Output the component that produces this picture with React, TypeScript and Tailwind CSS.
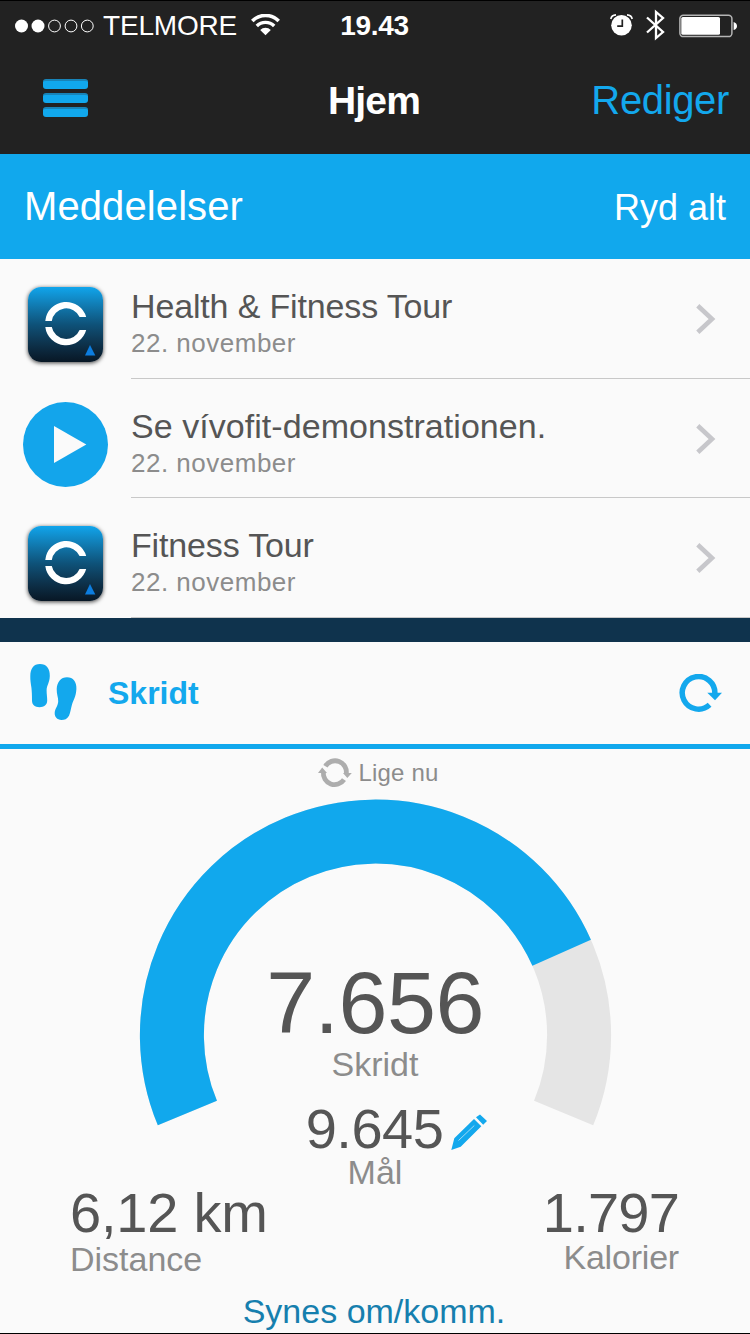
import React from "react";

const Notifications = [
  {
    id: 0,
    title: "Health & Fitness Tour",
    date: "22. november",
    icon: "tour",
    style: "h-[120px]",
    titleStyle: "tracking-[-0.15px]",
  },
  {
    id: 1,
    title: "Se vívofit-demonstrationen.",
    date: "22. november",
    icon: "play",
    style: "h-[119px]",
    titleStyle: "tracking-[0.05px]",
  },
  {
    id: 2,
    title: "Fitness Tour",
    date: "22. november",
    icon: "tour",
    style: "h-[120px]",
    titleStyle: "tracking-[-0.15px]",
  },
];

const steps = 7656;
const goal = 9645;
const sweep = 225;

const StatusBar: React.FC = () => {
  return (
    <div className="grid grid-cols-[1fr_auto_1fr] items-center h-[50px] pl-[15px] pr-[13px] border-t border-black text-[28px] leading-none">
      <div className="flex items-center">
        <svg width="79" height="14" viewBox="0 0 79 14" fill="none" stroke="#fff">
          <circle cx="6.5" cy="7" r="6.5" fill="#fff" stroke="none" />
          <circle cx="23" cy="7" r="6.5" fill="#fff" stroke="none" />
          <circle cx="39.5" cy="7" r="5.9" />
          <circle cx="56" cy="7" r="5.9" />
          <circle cx="72.3" cy="7" r="5.9" />
        </svg>
        <span className="ml-[9px] tracking-[-0.2px]">TELMORE</span>
        <svg className="ml-[14px] -mt-[2px]" width="29" height="22" viewBox="0 0 29 22">
          <path d="M1.3 7 A18.5 18.5 0 0 1 27.7 7" fill="none" stroke="#fff" strokeWidth="3.6" />
          <path d="M5.8 12 A12.2 12.2 0 0 1 23.2 12" fill="none" stroke="#fff" strokeWidth="3.4" />
          <path d="M9.2 16 A7.6 7.6 0 0 1 19.8 16 L14.5 21.3Z" fill="#fff" />
        </svg>
      </div>
      <span className="-ml-[3px] font-bold tracking-[-0.3px]">19.43</span>
      <div className="flex items-center justify-end">
        <svg className="-mt-[1px]" width="23" height="22" viewBox="0 0 23 22" fill="none" stroke="#fff">
          <circle cx="11.5" cy="11.2" r="10.3" fill="#fff" stroke="none" />
          <path d="M.8 5 Q1.5 1.2 6 .9 M22.2 5 Q21.5 1.2 17 .9" strokeWidth="1.6" />
          <path d="M12.3 5.5 V12.2 H7.2" stroke="#222" strokeWidth="1.7" />
        </svg>
        <svg className="ml-[13px] -mt-[1px]" width="19" height="32" viewBox="0 0 19 32" fill="none" stroke="#fff" strokeWidth="2.3">
          <path d="M1 8.5 L17 23 L10 29 V3 L17 9 L1 23.5" />
        </svg>
        <svg className="ml-[14px]" width="58" height="24" viewBox="0 0 58 24">
          <rect x=".9" y="1.2" width="52" height="21.4" rx="3.4" fill="none" stroke="#b5b5b5" strokeWidth="1.5" />
          <rect x="2.3" y="3" width="38.7" height="17.8" rx="1.6" fill="#fff" />
          <path d="M54.6 8 Q58 9 58 12 Q58 15 54.6 16Z" fill="#fff" />
        </svg>
      </div>
    </div>
  );
};

const TourIcon: React.FC = () => {
  return (
    <div className="size-[75px] rounded-[13px] bg-linear-to-b from-[#10a5ec] via-[#0e5279] to-[#081725] shadow-[0_1px_4px_rgba(0,0,0,0.75)]">
      <svg width="75" height="75" viewBox="0 0 75 75">
        <path d="M17.3 34 A20.9 20.9 0 0 1 58.2 30 H51.6 A14.6 14.6 0 0 0 23.8 34Z" fill="#fff" />
        <path d="M17.3 40 H23.8 A14.6 14.6 0 0 0 51.6 43 H58.2 A20.9 20.9 0 0 1 17.3 40Z" fill="#fff" />
        <path d="M62 58 L67.3 68.4 H57Z" fill="#0c7ddf" />
      </svg>
    </div>
  );
};

const PlayIcon: React.FC = () => {
  return (
    <svg width="85" height="85" viewBox="0 0 85 85">
      <circle cx="42.5" cy="42.5" r="42.5" fill="#13a5eb" />
      <path d="M31 24 L63.3 42.5 L31 61Z" fill="#fafafa" />
    </svg>
  );
};

const StepsCard: React.FC = () => {
  // the ring starts 22.5deg below the horizontal on the left side
  const progress = (steps / goal) * sweep;
  return (
    <div className="flex flex-col flex-1">
      <div className="flex items-center h-[107px] pl-[30px] pr-7 border-b-5 border-[#11a8ed]">
        <svg className="-mt-[2px]" width="47" height="56" viewBox="0 0 47 56" fill="#13a8ed">
          <path d="M10 0 C16.5 0 20 4.5 19.8 12 C19.6 19 16.6 21.5 16.6 26.5 C16.6 30 17.2 33 17.2 36.5 C17.2 41 14 43.2 9.5 43.2 C5 43.2 2 41 2 36.5 C2 31 1.9 28 1.4 23.5 C.8 19 .2 16.5 .3 12 C.4 4.5 3.5 0 10 0Z" />
          <path d="M37 13.3 C43.2 13.3 46.8 18 46.4 25 C46 32.5 43.6 35.5 42 40.5 C40.6 45.5 40.5 48.5 39 51.7 C37.2 55 34.5 56 31.5 56 C27 55.8 24.4 53 24.7 48.8 C25 44.5 28 42 28.2 37.5 C28.4 33.5 26.5 30 26.7 25 C27 18 31 13.3 37 13.3Z" />
        </svg>
        <h2 className="ml-[31px] text-[32px] font-bold text-[#13a8ed]">Skridt</h2>
        <svg className="ml-auto" width="43" height="39" viewBox="0 0 43 39">
          <path d="M35.8 20 A16.3 16.3 0 1 0 30.6 30.8" fill="none" stroke="#13a8ed" strokeWidth="5.5" />
          <path d="M28.3 18.7 H43 L36 26.2Z" fill="#13a8ed" />
        </svg>
      </div>
      <div className="flex items-center justify-center gap-[7px] h-[47px] pl-[6px] text-2xl tracking-[0.15px] text-[#8c8c8c]">
        <svg width="34" height="30" viewBox="0 0 34 30" fill="none" stroke="#adadad" strokeWidth="4.8">
          <path d="M7.4 8.2 A11.3 11.3 0 0 1 28.2 16" />
          <path d="M5.4 14 A11.3 11.3 0 0 0 26 21.6" />
          <path d="M25 15 H33.8 L29.3 20Z M0 15 H9 L4.2 9.5Z" fill="#adadad" stroke="none" />
        </svg>
        Lige nu
      </div>
      <div className="grid h-[391px]">
        <svg className="[grid-area:1/1]" width="750" height="391" viewBox="0 0 750 391" fill="none" strokeWidth="64">
          <g transform="rotate(157.5 375.5 239.2)">
            <circle cx="375.5" cy="239.2" r="203.6" pathLength="360" stroke="#e5e5e5" strokeDasharray={`${sweep} 360`} />
            <circle cx="375.5" cy="239.2" r="203.6" pathLength="360" stroke="#11a8ed" strokeDasharray={`${progress} 360`} />
          </g>
        </svg>
        <div className="[grid-area:1/1] flex flex-col items-center pt-[164px] text-[34px] text-[#8c8c8c]">
          <p className="text-[88px] leading-[86px] tracking-[-0.5px] text-[#555]">7.656</p>
          <p className="leading-9">Skridt</p>
          <div className="relative mt-[19px] pr-px text-[56px] leading-14 tracking-[-0.5px] text-[#555]">
            9.645
            <svg className="absolute left-full top-[13px] ml-[7px]" width="36" height="37" viewBox="0 0 36 37">
              <path d="M.3 36 L3.3 24.3 L23 5 L30.3 12.3 L9.7 32.7Z M25 3.3 L29 .5 L36 7 L32.2 10.7Z" fill="#13a8ed" />
              <path d="M7.5 26.5 L23.3 11.5" stroke="#fafafa" strokeOpacity="0.6" />
            </svg>
          </div>
          <p className="leading-[30px]">Mål</p>
        </div>
      </div>
      <div className="flex justify-between pl-[70px] pr-[71px] text-[34px] text-[#8c8c8c]">
        <div>
          <p className="text-[56px] leading-[51px] tracking-[-0.2px] text-[#555]">6,12 km</p>
          <p className="pt-px leading-10">Distance</p>
        </div>
        <div className="text-right">
          <p className="text-[56px] leading-[51px] tracking-[-0.8px] text-[#555]">1.797</p>
          <p className="pt-px leading-9 tracking-[-0.2px]">Kalorier</p>
        </div>
      </div>
      <a className="mt-auto pr-[2px] text-center text-[34px] leading-[43px] text-[#167fae]">Synes om/komm.</a>
    </div>
  );
};

const App: React.FC = () => {
  return (
    <div className="flex flex-col w-[750px] h-[1334px] overflow-hidden border-b border-black bg-[#fafafa] font-['Liberation_Sans',Arial,sans-serif]">
      <header className="h-[154px] bg-[#222] text-white">
        <StatusBar />
        <div className="grid grid-cols-[1fr_auto_1fr] items-center h-[104px] px-[21px] pb-1">
          <div className="flex flex-col gap-1 w-[45px] ml-[22px] -mt-[5px]">
            <span className="h-[10px] rounded-[3px] bg-[#11a8ed] border-t-2 border-[#1884b8]" />
            <span className="h-[10px] rounded-[3px] bg-[#11a8ed] border-t-2 border-[#1884b8]" />
            <span className="h-[10px] rounded-[3px] bg-[#11a8ed] border-t-2 border-[#1884b8]" />
          </div>
          <h1 className="-ml-[2px] text-[39px] leading-none font-bold tracking-[-0.8px]">Hjem</h1>
          <span className="text-right text-[40px] leading-none tracking-[-0.35px] text-[#13a8ed]">Rediger</span>
        </div>
      </header>
      <div className="flex items-center justify-between h-[105px] px-6 bg-[#11a8ed] text-white">
        <h2 className="-mt-[2px] text-[40px] tracking-[0.1px]">Meddelelser</h2>
        <span className="mt-[2px] text-4xl">Ryd alt</span>
      </div>
      <div>
        {Notifications.map((item) => (
          <div key={item.id} className={`flex ${item.style}`}>
            <div className="flex items-center justify-center w-[131px] pt-[11px]">{item.icon === "play" ? <PlayIcon /> : <TourIcon />}</div>
            <div className="flex flex-1 justify-between pr-[34px] border-b border-[#c8c8c8]">
              <div className="pt-[29px]">
                <p className={`text-[34px] leading-9 text-[#555] ${item.titleStyle}`}>{item.title}</p>
                <p className="mt-px text-[26px] leading-9 tracking-[0.5px] text-[#8c8c8c]">{item.date}</p>
              </div>
              <svg className="mt-[45px]" width="20" height="30" viewBox="0 0 20 30">
                <path d="M1.8 1.7 L16 15 L1.8 28.3" fill="none" stroke="#c7c7cb" strokeWidth="4.6" />
              </svg>
            </div>
          </div>
        ))}
      </div>
      <div className="h-6 bg-[#0f334d]" />
      <StepsCard />
    </div>
  );
};

export default App;
